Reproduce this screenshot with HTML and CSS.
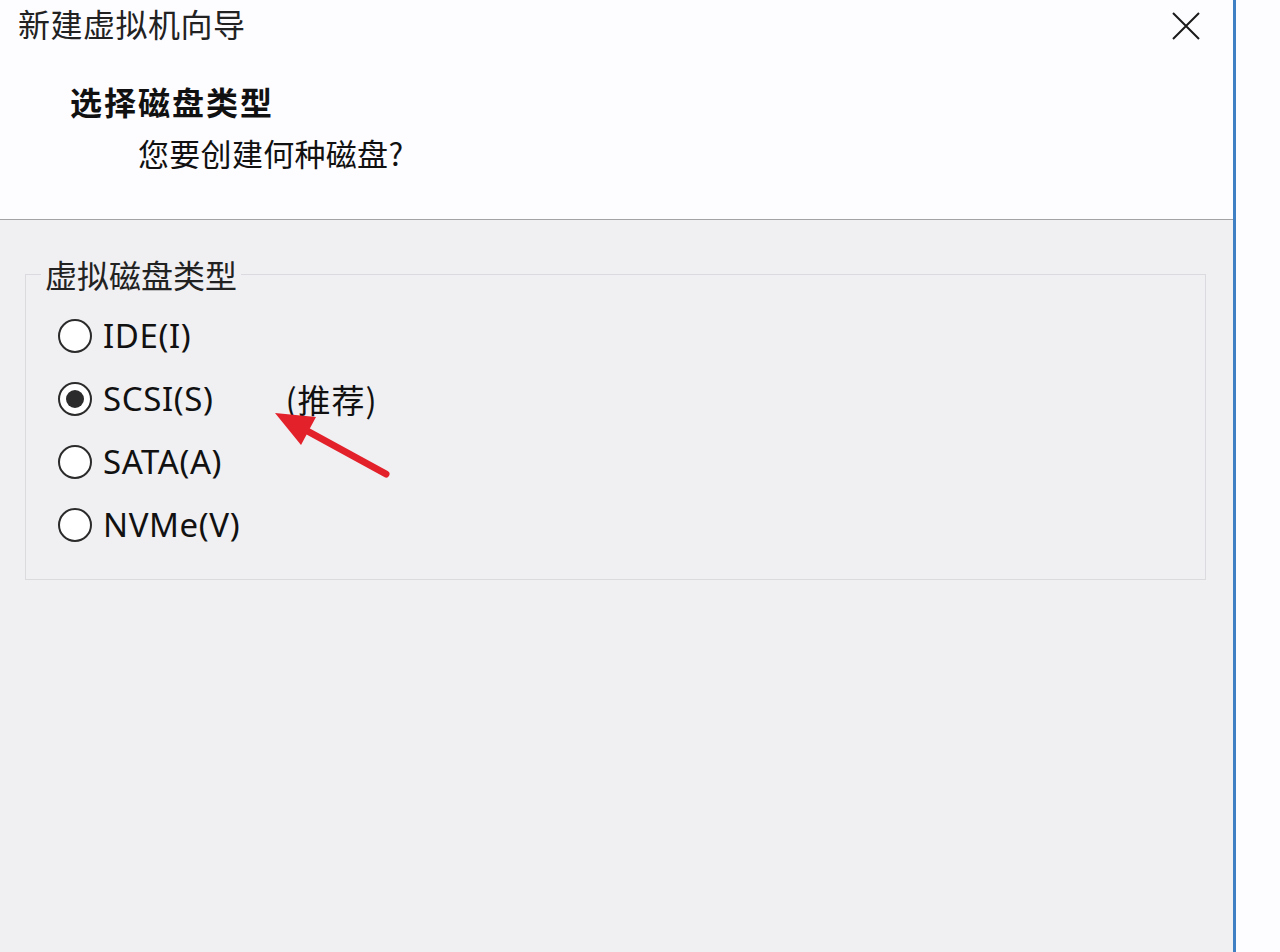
FILE: index.html
```html
<!DOCTYPE html>
<html lang="zh-CN">
<head>
<meta charset="utf-8">
<title>新建虚拟机向导</title>
<link rel="stylesheet" href="styles.css">
</head>
<body>
<div class="screen">
  <div class="dialog">
    <div class="header">
      <div class="titlebar">
        <span class="title">新建虚拟机向导</span>
        <svg class="close" width="28" height="28" viewBox="0 0 28 28">
          <path d="M1 1 L27 27 M27 1 L1 27" stroke="#1a1a1a" stroke-width="2" fill="none"/>
        </svg>
      </div>
      <div class="heading">选择磁盘类型</div>
      <div class="subtitle">您要创建何种磁盘?</div>
    </div>
    <div class="content">
      <fieldset class="group">
        <legend class="legend">虚拟磁盘类型</legend>
        <div class="options">
          <div class="option"><span class="radio"></span><span class="label">IDE(I)</span></div>
          <div class="option"><span class="radio checked"></span><span class="label">SCSI(S)</span><span class="note">(推荐)</span></div>
          <div class="option"><span class="radio"></span><span class="label">SATA(A)</span></div>
          <div class="option"><span class="radio"></span><span class="label">NVMe(V)</span></div>
        </div>
      </fieldset>
    </div>
  </div>
  <div class="outside"></div>
  <svg class="arrow" width="1280" height="952" viewBox="0 0 1280 952">
    <line x1="386" y1="474" x2="300" y2="427" stroke="#e3212b" stroke-width="7" stroke-linecap="round"/>
    <polygon points="275,413 316,417 301,445" fill="#e3212b"/>
  </svg>
</div>
</body>
</html>
```

FILE: styles.css
```css
html, body {
  margin: 0;
  padding: 0;
  background: #fdfcff;
}

.screen {
  position: relative;
  display: flex;
  width: 1280px;
  height: 952px;
  overflow: hidden;
  font-family: "Noto Sans CJK SC", "Noto Sans", sans-serif;
  color: #111;
}

.dialog {
  width: 1233px;
  height: 952px;
  display: flex;
  flex-direction: column;
  border-right: 3px solid #3f80c4;
  background: #f0eff2;
}

.outside {
  flex: 1;
  background: #fdfcff;
}

.header {
  height: 219px;
  background: #fdfcff;
  border-bottom: 1px solid #a3a3a6;
  box-sizing: content-box;
}

.titlebar {
  display: flex;
  align-items: center;
  justify-content: space-between;
  padding: 7px 33px 0 18px;
  height: 32px;
}

.title {
  font-size: 32px;
  line-height: 32px;
  letter-spacing: 0.5px;
  color: #222;
}

.close {
  display: block;
  margin-top: 6px;
}

.heading {
  margin-top: 46px;
  padding-left: 70px;
  font-size: 32px;
  line-height: 32px;
  font-weight: bold;
  letter-spacing: 2px;
}

.subtitle {
  margin-top: 20px;
  padding-left: 138px;
  font-size: 31px;
  line-height: 32px;
  letter-spacing: 0.3px;
}

.content {
  flex: 1;
  padding: 38px 0 0 25px;
}

.group {
  width: 1181px;
  box-sizing: border-box;
  margin: 0;
  padding: 0;
  border: 1px solid #dbdadf;
}

.legend {
  margin-left: 15px;
  padding: 0 4px;
  font-size: 32px;
  line-height: 32px;
  color: #222;
}

.options {
  padding: 14px 0 23px 32px;
}

.option {
  display: flex;
  align-items: center;
  height: 63px;
}

.radio {
  width: 34px;
  height: 34px;
  box-sizing: border-box;
  border: 2px solid #2b2b2b;
  border-radius: 50%;
  background: #ffffff;
  display: flex;
  align-items: center;
  justify-content: center;
}

.radio.checked::after {
  content: "";
  width: 18px;
  height: 18px;
  border-radius: 50%;
  background: #2b2b2b;
}

.label {
  margin-left: 11px;
  font-family: "Noto Sans", "Noto Sans CJK SC", sans-serif;
  font-size: 33px;
  line-height: 32px;
  letter-spacing: 0.6px;
}

.note {
  margin-left: 72px;
  font-size: 33px;
  line-height: 32px;
  letter-spacing: 1px;
}

.arrow {
  position: absolute;
  left: 0;
  top: 0;
  pointer-events: none;
}
```
